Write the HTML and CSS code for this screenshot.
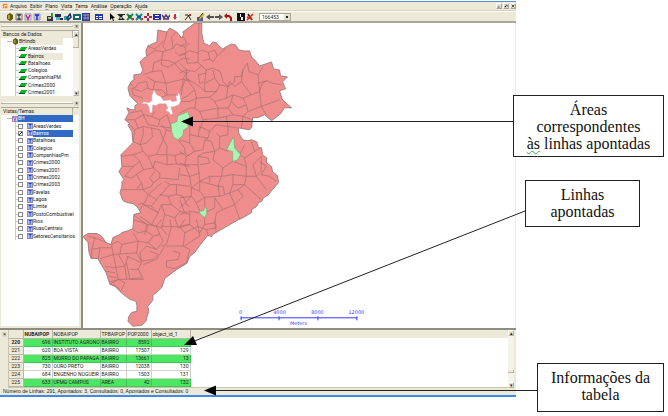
FILE: index.html
```html
<!DOCTYPE html>
<html lang="pt-BR">
<head>
<meta charset="utf-8">
<title>TerraView</title>
<link rel="stylesheet" href="styles.css">
</head>
<body>
<main class="page">
<div class="app">
  <header class="menubar">
    <svg class="logo" viewBox="0 0 8 8"><path fill="#f58a2a" d="M1 1h6v6H1z"/><path fill="#fff" d="M3 3h3v1H4v2H3z"/></svg>
    <nav class="menus">
      <a href="#"><u>A</u>rquivo</a><a href="#"><u>E</u>xibir</a><a href="#"><u>P</u>lano</a><a href="#"><u>V</u>ista</a><a href="#"><u>T</u>ema</a><a href="#">A<u>n</u>álise</a><a href="#"><u>O</u>peração</a><a href="#">Aj<u>u</u>da</a>
    </nav>
    <div class="winbtns">
      <button aria-label="Minimizar"><svg viewBox="0 0 6 6"><path d="M1 4h3v1H1z"/></svg></button>
      <button aria-label="Restaurar"><svg viewBox="0 0 6 6"><path d="M2 1h3v3H4V2H2zM1 3h2v2H1z"/></svg></button>
      <button aria-label="Fechar"><svg viewBox="0 0 6 6"><path d="M1 1l4 4M5 1L1 5" stroke="#111"/></svg></button>
    </div>
  </header>

  <div class="toolbar">
    <div class="tools">
      <button aria-label="Banco"><svg viewBox="0 0 8 8"><path fill="#5d5a08" d="M1 2l3-2 3 2v4L4 8 1 6z"/><path fill="#a8a020" d="M2 2h2v4H2z"/></svg></button>
      <button aria-label="Importar"><svg viewBox="0 0 8 8"><path fill="#ddd" stroke="#777" d="M1 1h6v6H1z"/><path stroke="#222" d="M4 1v6M2 2h4M2 6h4"/></svg></button>
      <button aria-label="Vista"><svg viewBox="0 0 8 8"><path fill="#f3e4f5" stroke="#999" d="M1 1h6v6H1z"/><path fill="none" stroke="#b01fa8" stroke-width="1.5" d="M2 2l2 4 2-4"/></svg></button>
      <button aria-label="Tema"><svg viewBox="0 0 8 8"><path fill="#c7c8f5" stroke="#999" d="M1 1h6v6H1z"/><path stroke="#2222e0" stroke-width="1.5" d="M2 2h4M4 2v5"/></svg></button>
    </div>
    <div class="tools">
      <button aria-label="Camada"><svg viewBox="0 0 8 8"><path fill="#23337a" d="M1 3h6v5H1z"/><path fill="#d9bf2e" d="M2 4h3v2H2z"/><path fill="#2a9a4a" d="M5 0h2v4H5z"/></svg></button>
      <button aria-label="Editar"><svg viewBox="0 0 8 8"><path fill="#252a55" d="M0 1h6v3H0zM3 5h5v2H3z"/><path fill="#4bb8c5" d="M1 4h4v3H1z"/></svg></button>
      <button aria-label="Buscar"><svg viewBox="0 0 8 8"><path fill="#3aa19c" d="M0 3h5v4H0z"/><path fill="none" stroke="#172e78" stroke-width="1.5" d="M3 5l3-4 1 3-3 3z"/></svg></button>
      <button aria-label="Quadro"><svg viewBox="0 0 8 8"><path fill="#15656a" d="M0 1h8v6H0z"/><path fill="#fff" d="M2 3h4v2H2z"/></svg></button>
      <button aria-label="Grade"><svg viewBox="0 0 8 8"><path fill="#343796" d="M0 0h8v8H0z"/><path stroke="#bbb" d="M1 2h6M1 5h6M3 1v6M6 1v6" stroke-width=".7"/></svg></button>
    </div>
    <div class="tools">
      <button aria-label="Tabela"><svg viewBox="0 0 8 8"><path fill="#24379c" d="M0 1h8v6H0z"/><path fill="#fff" d="M1 3h2v1H1zM4 3h3v1H4zM1 5h2v1H1zM4 5h3v1H4z"/></svg></button>
    </div>
    <div class="tools">
      <button aria-label="Apontar"><svg viewBox="0 0 8 8"><path d="M2 0l5 5H5l1 3-1 0-1-3-2 2z"/></svg></button>
      <button aria-label="Desenhar"><svg viewBox="0 0 8 8"><path fill="#222" d="M0 1h8v1H6L5 4l3 3H1l2-3z"/><path stroke="#fff" d="M3 5h2"/></svg></button>
      <button aria-label="Aproximar"><svg viewBox="0 0 8 8"><path stroke="#16877a" stroke-width="2" d="M1 1l6 6M7 1L1 7"/><path fill="#172" d="M2 2h3v3H2z"/><path fill="#c33" d="M6 5h2v2H6z"/></svg></button>
      <button aria-label="Afastar"><svg viewBox="0 0 8 8"><path stroke="#16878a" stroke-width="2" d="M1 1l6 6M7 1L1 7"/><path fill="#15c" d="M2 3h4v2H2z"/><path fill="#c33" d="M6 5h2v2H6z"/></svg></button>
      <button aria-label="Mover"><svg viewBox="0 0 8 8"><path fill="#b22446" d="M3 0h2v3h3v2H5v3H3V5H0V3h3z"/><path fill="#fff" d="M3 3h2v2H3z"/></svg></button>
      <button aria-label="Tudo"><svg viewBox="0 0 8 8"><path fill="#2b2e9c" d="M0 1h8v6H0z"/><path fill="#fff" d="M2 2h4v1H2zM2 5h4v1H2z"/></svg></button>
      <button aria-label="Medir"><svg viewBox="0 0 8 8"><path fill="none" stroke="#523a78" stroke-width="1.5" d="M0 2l2 3 2-3 2 3 2-3M1 6h6"/></svg></button>
      <button aria-label="Informar"><svg viewBox="0 0 8 8"><path fill="#fff" d="M0 0h8v8H0z"/><path fill="#e22" d="M3 1h2v3h1L4 7 2 4h1z"/></svg></button>
    </div>
    <div class="tools">
      <button aria-label="Cortar"><svg viewBox="0 0 8 8"><path fill="none" stroke="#222" d="M1 7l5-6M1 2h3l3 5"/><path fill="#c22" d="M5 1h2v2H5z"/></svg></button>
    </div>
    <div class="tools">
      <button aria-label="Pintar"><svg viewBox="0 0 8 8"><path fill="#555aa0" d="M0 4h6v4H0z"/><path stroke="#d8b11c" stroke-width="2" d="M2 6l5-5"/><path stroke="#333" d="M1 6l5-6"/></svg></button>
      <button aria-label="Anterior"><svg viewBox="0 0 8 8"><path fill="#555" d="M0 4l4-3v2h4v2H4v2z"/></svg></button>
      <button aria-label="Próximo"><svg viewBox="0 0 8 8"><path fill="#555" d="M8 4L4 1v2H0v2h4v2z"/></svg></button>
      <button aria-label="Desfazer"><svg viewBox="0 0 8 8"><path fill="none" stroke="#a61515" stroke-width="2" d="M2 3h3l2 2v3"/><path fill="#a61515" d="M0 3l3-3v6z"/></svg></button>
    </div>
    <div class="tools">
      <button aria-label="Parar"><svg viewBox="0 0 8 8"><path fill="#111" d="M0 0h8v8H0z"/><path fill="#fff" d="M3 1h1v3H3zM4 4h2v3H4z"/></svg></button>
      <button aria-label="Cancelar"><svg viewBox="0 0 8 8"><path stroke="#222" stroke-width="1.5" d="M2 1l4 6"/><path stroke="#e02020" stroke-width="1.5" d="M1 7l6-6M1 4l5 2"/></svg></button>
    </div>
    <select class="scale" aria-label="Escala"><option>166453</option></select>
  </div>

  <div class="work">
    <aside class="side">
      <div class="grip"><i></i><button aria-label="Fechar bancos">×</button></div>
      <section class="dock">
        <div class="col">
          <h2>Bancos de Dados</h2>
          <ul class="tree bases">
            <li class="root lit"><svg viewBox="0 0 8 8"><path fill="#5d5a08" d="M1 2l3-2 3 2v4L4 8 1 6z"/><path fill="#a8a020" d="M2 2h2v4H2z"/></svg><span>BHindb</span></li>
            <li><b class="layer"></b><span>AreasVerdes</span></li>
            <li class="lit"><b class="layer"></b><span>Bairros</span></li>
            <li><b class="layer"></b><span>Batalhoes</span></li>
            <li><b class="layer"></b><span>Colegios</span></li>
            <li><b class="layer"></b><span>CompanhiaPM</span></li>
            <li><b class="layer"></b><span>Crimes2000</span></li>
            <li><b class="layer"></b><span>Crimes2001</span></li>
          </ul>
        </div>
        <div class="vscroll tall"><button aria-label="Subir">▴</button><i></i><button aria-label="Descer">▾</button></div>
      </section>
      <div class="grip"><i></i><button aria-label="Fechar vistas">×</button></div>
      <section class="dock views">
        <div class="col">
          <h2>Vistas/Temas</h2>
          <ul class="tree themes">
            <li class="root sel"><b class="v">V</b><span>BH</span></li>
            <li><input type="checkbox" id="t1"><b class="t">T</b><label for="t1">AreasVerdes</label></li>
            <li class="sel"><input type="checkbox" id="t2" checked><b class="t">T</b><label for="t2">Bairros</label></li>
            <li><input type="checkbox" id="t3"><b class="t">T</b><label for="t3">Batalhoes</label></li>
            <li><input type="checkbox" id="t4"><b class="t">T</b><label for="t4">Colegios</label></li>
            <li><input type="checkbox" id="t5"><b class="t">T</b><label for="t5">CompanhiasPm</label></li>
            <li><input type="checkbox" id="t6"><b class="t">T</b><label for="t6">Crimes2000</label></li>
            <li><input type="checkbox" id="t7"><b class="t">T</b><label for="t7">Crimes2001</label></li>
            <li><input type="checkbox" id="t8"><b class="t">T</b><label for="t8">Crimes2002</label></li>
            <li><input type="checkbox" id="t9"><b class="t">T</b><label for="t9">Crimes2003</label></li>
            <li><input type="checkbox" id="t10"><b class="t">T</b><label for="t10">Favelas</label></li>
            <li><input type="checkbox" id="t11"><b class="t">T</b><label for="t11">Lagoa</label></li>
            <li><input type="checkbox" id="t12"><b class="t">T</b><label for="t12">Limite</label></li>
            <li><input type="checkbox" id="t13"><b class="t">T</b><label for="t13">PostoCombustivel</label></li>
            <li><input type="checkbox" id="t14"><b class="t">T</b><label for="t14">Rios</label></li>
            <li><input type="checkbox" id="t15"><b class="t">T</b><label for="t15">RuasCentrais</label></li>
            <li><input type="checkbox" id="t16"><b class="t">T</b><label for="t16">SetoresCensitarios</label></li>
          </ul>
        </div>
        <div class="stub"></div>
      </section>
    </aside>

    <section class="map">
      <svg viewBox="83 23 433 306" role="img" aria-label="Mapa dos bairros">
        <defs><clipPath id="city"><use href="#outline"/></clipPath></defs>
        <path id="outline" fill="#ef8c8c" stroke="#8d7474" stroke-width=".8" d="M128 88L131 82 134 80 134 75 141 74 143 70 140 62 144 58 147 57 146 51 148 46 157 42 158 30 167 32 170 28 177 32 182 38 184 34 183 32 190 27 195 23 202 23 202 33 204 43 210 46 213 42 217 43 219 46 223 49 228 46 232 44 236 45 239 50 245 51 250 51 252 57 256 61 260 66 266 64 272 62 274 69 280 70 281 76 288 77 283 82 286 89 280 91 283 100 292 108 285 108 281 114 272 121 265 115 258 118 253 118 252 128 250 130 243 129 239 128 239 133 243 140 248 141 252 140 257 142 259 148 262 148 263 155 267 158 267 163 272 167 273 172 278 176 279 183 273 190 268 196 264 198 262 202 259 203 257 207 252 210 252 213 242 219 239 220 213 235 212 237 208 236 200 246 195 253 190 257 187 264 177 270 165 279 162 288 158 292 153 296 153 301 148 307 149 312 147 318 146 322 142 326 133 327 128 322 129 317 132 313 137 312 137 306 136 302 130 300 122 294 115 287 110 285 109 282 106 273 100 263 98 259 91 259 89 253 88 243 83 237 88 234 97 234 102 237 106 243 111 245 113 238 120 235 122 233 129 231 133 229 134 215 141 213 137 207 133 204 127 203 123 201 120 193 122 187 122 182 124 180 119 172 122 167 121 155 128 148 133 143 132 132 128 125 130 124 125 120 129 113 127 108 131 110 135 110 135 106 138 104 130 96Z"/>
        <g clip-path="url(#city)" fill="none" stroke="#a66e6e" stroke-width="2">
          <g transform="translate(180 20) scale(.3333)">
            <path d="M58 8L56 68 55 128 80 150 100 145 122 155 130 185 145 200 165 185 165 170 185 170 190 150 203 130 208 155 235 165 250 140M0 50L15 55 20 70 0 80M0 105L15 100 30 92 55 100M15 100L22 130 55 128M55 98L65 90 86 98 90 118 70 122M86 98L105 90 112 108 100 125 90 118M112 108L140 85M0 130L20 150 20 175 0 215M0 160L20 150 45 155 65 138M20 175L45 210 20 230 0 240M20 175L60 200 75 215M80 150L75 185 60 190 56 165 78 160M75 215L75 190 105 175 100 150M105 175L120 195 110 215 75 215M120 195L145 200 150 185 165 200 185 185 190 150M185 185L215 225 240 215 235 165M235 190L262 183 280 190 305 195M240 215L248 190 262 183M240 215L245 260 300 240M45 210L50 235 90 232 110 215M50 235L30 245 0 245M90 232L105 245 140 235 145 200M140 235L160 225 190 235 215 225M160 225L155 245 175 265 200 255 190 235M105 245L115 265 145 265 155 245M50 235L45 265 60 275 115 265M0 280L30 265 45 265M200 255L205 275 245 260M205 275L190 290 160 285 145 265M60 275L70 300 115 295 115 265M115 295L140 290 160 285M190 290L218 300M245 260L260 285M70 300L60 330M140 290L145 320M190 290L185 325"/>
          </g>
          <g transform="translate(80 20) scale(.3333)">
            <path d="M262 35L250 80 260 92 280 85 275 50 290 35M203 78L225 88 250 65M195 112L225 92 250 95 260 92M250 95L245 120 222 128 218 155 190 165M245 120L265 122 285 130 265 142 245 135 245 120M280 85L290 72 315 80 330 70M315 80L320 100 300 108 285 95M285 130L310 115 330 118M218 155L245 152 258 190 225 185 200 170M258 190L310 178 320 160 330 155M310 178L330 185M285 130L300 150 320 160M225 185L220 210 200 205 185 215 155 205M150 190L165 205 175 190 200 185 205 205M155 205L160 225 190 235M258 190L262 225 240 235M310 178L305 225M262 225L290 225M262 225L245 210 222 210M150 280L185 272 190 285 215 290 225 275M140 300L165 300 190 285M165 300L175 325M190 285L205 315 235 320 240 300 215 290M240 300L262 285M240 320L275 325 262 285"/>
          </g>
          <g transform="translate(80 125) scale(.3333)">
            <path d="M150 0L165 15 160 50 180 60 190 80 160 90 125 95M165 15L190 5 215 10 218 35 200 55 180 60M190 5L190 30 180 60M215 10L240 15 250 45 230 90 205 95 190 80M250 45L260 15 245 0M260 15L275 20M250 45L262 65 260 90 230 90M262 90L285 92 290 118 262 120 262 90M285 92L315 85 330 95M295 45L315 70 315 85M290 118L330 125M160 90L180 110 160 125 125 125M160 125L135 155M180 110L190 135 220 130 205 95M220 130L225 110 262 120M190 135L170 150 185 175 170 195 125 195M135 155L155 160 170 150M220 130L240 145 240 160 220 175 210 160 225 140M240 160L295 165 300 130M185 175L190 195 170 195M190 195L205 210 245 175M205 210L195 235 175 240M190 195L215 185 220 175M205 210L230 225 270 180 255 170M230 225L215 245 190 240 178 260M215 245L235 265 245 240 275 240 265 215 240 210M190 240L235 265 215 300 180 275M270 180L290 180 290 210 265 215M290 180L330 185M290 210L310 215 320 240 330 245M275 240L300 260 285 280 255 270 245 240M285 280L295 310 330 300M255 270L245 310 215 300M300 260L330 270M300 225L315 265M160 270L200 300 195 330M245 310L260 330"/>
          </g>
          <g transform="translate(180 125) scale(.3333)">
            <path d="M30 0L30 30 55 35 60 5M60 5L90 20 85 40 55 35M90 20L110 0 145 5 145 30 120 35 110 25M145 5L175 10M0 45L30 55 30 30M30 55L45 80 70 75 75 45 85 40M75 45L95 50 105 80 70 85M105 80L120 70 120 35M120 70L145 80M0 80L20 95 45 80M20 95L15 120 55 120 55 95 70 85M55 95L85 100 90 115 60 120M105 80L100 105 130 130 125 155 90 155 60 170 55 120M130 130L160 110M0 115L15 120 30 155 0 150M30 155L60 145M30 155L35 190 60 170M60 170L115 185 125 155 160 150 200 155M90 155L90 175M160 110L200 125 195 100 180 90M200 125L200 155 230 155 220 120 245 95M195 100L225 80 215 50M180 90L195 60M225 80L240 70M245 95L245 140 230 155M240 110L260 125 245 150 270 155M200 155L195 180 160 180 160 150M195 180L245 225M270 155L290 170M230 155L260 195M160 180L150 205 175 195 195 180M115 185L120 215 75 218 60 200 60 170M35 190L35 215 0 220M35 190L60 200M120 215L135 210 130 185 115 185M135 210L150 205 165 240 130 255 105 220M165 240L190 215 175 195M165 240L180 285M130 255L110 265 105 295 110 325M75 218L75 248M0 250L35 215 50 235 75 218M50 235L60 260M82 262L105 250 105 220M0 270L30 260 58 265M30 260L30 300 0 305M30 300L60 325 75 300 75 278M75 300L105 295"/>
          </g>
          <g transform="translate(70 220) scale(.3333)">
            <path d="M190 0L235 15 230 35 205 40 190 30M235 15L260 20 275 0M230 35L250 50 270 45 260 20M250 50L235 70 205 65 190 40M270 45L280 65 260 90 235 70M275 20L330 22 345 0M300 0L305 22 290 75 275 80M330 22L345 40 340 80 290 80M345 40L385 20 380 0M385 20L390 50 365 65 345 80M385 20L410 30 415 48M410 30L440 25 435 0M340 80L360 90 350 130 315 148 290 142 290 125 325 120 330 100 310 95M260 90L230 80 210 100 215 125 250 120 265 105 240 95M285 80L260 120 220 135M205 65L200 100 215 125M205 65L155 75 145 65 125 75 130 105 200 100M155 75L150 105M130 105L90 118M125 75L75 55 55 50M75 55L65 90 65 115M65 90L90 85 125 85M90 85L85 118M130 105L145 180 115 190M145 105L165 140 175 110M130 145L165 140 170 180 145 180M105 140L130 145M105 155L135 160M115 170L140 175M170 130L180 180 220 180 205 150 215 130 170 110M180 150L205 150M120 195L145 180 165 190 150 220M130 195L150 210M170 180L215 175"/>
          </g>
        </g>
        <path fill="#fff" stroke="#c9a5a5" stroke-width=".4" d="M142 104L144 102 149 103 152 101 152 96 154 90 157 95 161 97 164 101 170 100 173 102 177 101 176 96 178 96 178 93 180 95 181 101 179 105 174 107 171 107 173 114 171 115 169 112 166 111 168 108 166 104 159 104 156 106 153 105 152 113 150 113 149 107 147 104Z"/>
        <g fill="#a9f5b3" stroke="#7b9a78" stroke-width=".6">
          <path d="M171 124L177 122 178 116 188 112 190 117 189 122 188 128 184 130 183 136 178 140 174 138 172 132Z"/>
          <path d="M234 137L235 148 241 155 238 160 233 162 233 152 227 150 231 142Z"/>
          <path d="M199 212L204 211 205 208 207 209 207 214 205 218 202 216Z"/>
        </g>
        <g class="ruler"><path d="M241 318.500H358M241.500 317v4M279.500 317v4M318.500 317v4M357.500 317v4" stroke="#3838ff"/><text x="241" y="315">0</text><text x="280" y="315">4000</text><text x="318" y="315">8000</text><text x="357" y="315">12000</text><text x="299" y="326">Meters</text></g>
      </svg>
    </section>
  </div>

  <section class="grid-dock">
    <div class="gutter"><button aria-label="Fechar tabela">×</button></div>
    <div class="grid-area">
      <table>
        <colgroup><col class="c0"><col class="c1"><col class="c2"><col class="c3"><col class="c4"><col class="c5"><col></colgroup>
        <thead><tr><th></th><th><strong>NUBAIPOP</strong></th><th>NOBAIPOP</th><th>TPBAIPOP</th><th>POP2000</th><th>object_id_1</th><th></th></tr></thead>
        <tbody>
          <tr class="hit"><th><strong>220</strong></th><td class="n">696</td><td>INSTITUTO AGRONO</td><td>BAIRRO</td><td class="n">8592</td><td class="n"></td><td></td></tr>
          <tr><th>221</th><td class="n">620</td><td>BOA VISTA</td><td>BAIRRO</td><td class="n">17507</td><td class="n">129</td><td></td></tr>
          <tr class="hit"><th>222</th><td class="n">825</td><td>MORRO DO PAPAGA</td><td>BAIRRO</td><td class="n">13661</td><td class="n">13</td><td></td></tr>
          <tr><th>223</th><td class="n">730</td><td>OURO PRETO</td><td>BAIRRO</td><td class="n">12038</td><td class="n">130</td><td></td></tr>
          <tr><th>224</th><td class="n">684</td><td>ENGENHO NOGUEIR</td><td>BAIRRO</td><td class="n">1503</td><td class="n">131</td><td></td></tr>
          <tr class="hit"><th>225</th><td class="n">633</td><td>UFMG CAMPUS</td><td>AREA</td><td class="n">42</td><td class="n">132</td><td></td></tr>
        </tbody>
      </table>
    </div>
    <div class="vscroll low"><button aria-label="Subir tabela">▴</button><i></i><button aria-label="Descer tabela">▾</button></div>
  </section>
  <footer class="status">Número de Linhas: 291, Apontados: 3, Consultados: 0, Apontados e Consultados: 0</footer>
</div>

<svg class="leaders" viewBox="0 0 668 416" aria-hidden="true">
  <g stroke="#222" stroke-width="1"><path d="M513 121.500H190M525 211L192 342M537 390.500H214"/></g>
  <path d="M181 121.500l12-5v10zM184 345l9-9 4 9zM204 390.500l12-5v10z"/>
</svg>
<p class="note areas">Áreas<br>correspondentes<br><span class="wavy">às</span> linhas apontadas</p>
<p class="note rows">Linhas<br>apontadas</p>
<p class="note info">Informações da<br>tabela</p>
</main>
</body>
</html>
```
FILE: styles.css
```css
* { box-sizing: border-box; }
body { margin: 0; background: #fff; color: #222; font-family: Roboto, "Liberation Sans", sans-serif; font-size: 5px; line-height: 7px; }
button { padding: 0; margin: 0; border: 0; background: none; font: inherit; color: inherit; display: block; }
svg { display: block; }
.page { position: relative; display: grid; grid-template-columns: 1fr 152px; min-height: 416px; align-items: start; padding-top: 1px; }
.app { border-top: 1px solid #5f8fd8; border-bottom: 2px solid #3f8ae6; background: #ece9d8; min-width: 0; }

.menubar { display: flex; align-items: center; height: 9px; padding-left: 2px; border-bottom: 1px solid #d5d1bf; }
.logo { width: 6px; height: 6px; margin-right: 2px; }
.menus { display: flex; flex: 1; gap: 3px; }
.menus a { color: #222; text-decoration: none; }
.menus u { text-decoration-color: #999; }
.winbtns { display: flex; gap: 1px; }
.winbtns button { width: 6px; height: 6px; background: #e4e0d0; border: 1px solid #aaa799; border-top-color: #fff; border-left-color: #fff; }

.toolbar { display: flex; align-items: center; height: 12px; padding-left: 6px; gap: 5px; border-top: 1px solid #fff; border-bottom: 2px solid #aca899; }
.tools { display: flex; gap: 1px; }
.tools button, .tools svg { width: 8px; height: 8px; }
.scale { appearance: none; width: 32px; height: 8px; margin: 0; padding: 0 2px; border: 1px solid #aaa799; border-radius: 0; color: #222; font: inherit; line-height: 6px; background: linear-gradient(#222, #222) right 2px center / 2px 2px no-repeat, linear-gradient(#e4e0d0, #e4e0d0) right / 6px 100% no-repeat, #fff; }

.work { display: grid; grid-template-columns: 83px 1fr; }
.side { display: flex; flex-direction: column; border-right: 2px solid #8f8c80; padding: 0 2px 2px 1px; min-width: 0; }
.grip { display: flex; align-items: center; gap: 1px; height: 8px; margin-top: -1px; }
.grip i { flex: 1; height: 2px; border: 1px solid #b9b5a4; border-top-color: #fff; }
.grip button, .gutter button { width: 5px; height: 5px; line-height: 5px; text-align: center; background: #dedac9; }
.dock { display: flex; background: #fff; height: 66px; border-top: 1px solid #aca899; margin-bottom: 4px; }
.dock .col { flex: 1; min-width: 0; }
.views { flex: 1; margin-bottom: 0; }
h2 { margin: 0; height: 7px; padding-left: 2px; font: inherit; line-height: 7px; background: #ece9d8; border-right: 1px solid #b9b5a4; }
.tree { margin: 0; padding: 0 0 0 6px; list-style: none; display: grid; grid-template-columns: minmax(0, 1fr); grid-auto-rows: 1fr; }
.bases { height: 58px; margin-right: 10px; }
.themes { height: 125px; }
.tree li { display: flex; align-items: center; padding-left: 12px; min-height: 0; white-space: nowrap; background: linear-gradient(#ccc, #ccc) 8px 0 / 1px 100% no-repeat, linear-gradient(#ccc, #ccc) 8px 50% / 4px 1px no-repeat; }
.tree .root { padding-left: 5px; background: linear-gradient(#bbb, #bbb) 0 50% / 5px 1px no-repeat; }
.tree svg { width: 7px; height: 7px; }
.tree .lit span { flex: 1; background: #ece9d8; }
.tree .sel span, .tree .sel label { flex: 1; background: #316ac5; color: #fff; }
.tree .layer { width: 6px; height: 4px; margin: 0 2px 0 1px; background: #08b326; border-bottom: 1px solid #124a1b; transform: skewX(-35deg); }
.themes .t, .themes .v { flex: none; width: 6px; height: 6px; background: #b9baf2; color: #1818d8; border: 1px solid #8d8daf; line-height: 4px; text-align: center; }
.themes .v { background: #f3dcf2; color: #a81ba0; }
.themes input { appearance: none; width: 5px; height: 5px; margin: 0 4px 0 0; border: 1px solid #888; background: #fff; flex: none; }
.themes input:checked { background: linear-gradient(135deg, #fff 35%, #111 36%, #111 65%, #fff 66%); }
.themes li:not(.root) { padding-left: 11px; }
.stub { width: 6px; height: 7px; background: #ece9d8; }
.vscroll { display: flex; flex-direction: column; width: 6px; background: #f5f3ea; }
.vscroll button { width: 6px; height: 6px; line-height: 5px; text-align: center; background: #e4e0d0; border: 1px solid #b9b5a4; border-top-color: #fff; border-left-color: #fff; }
.vscroll i { background: #ece9d8; border-right: 1px solid #b9b5a4; border-bottom: 1px solid #b9b5a4; }
.tall i { height: 11px; margin-bottom: auto; }
.low i { height: 3px; margin-top: auto; margin-bottom: 9px; }

.map { background: #fff; min-width: 0; border-right: 1px solid #e4eff2; }
.map svg { width: 100%; }
.ruler text { fill: #3838ff; font-family: "DejaVu Sans", sans-serif; font-size: 5px; text-anchor: middle; }

.grid-dock { display: flex; border-top: 2px solid #8f8c80; padding-right: 2px; }
.gutter { width: 9px; padding: 2px; border-right: 1px solid #c9c5b4; }
.grid-area { flex: 1; min-width: 0; background: #fff; border-bottom: 1px solid #c9c5b4; }
table { width: 100%; table-layout: fixed; border-collapse: collapse; line-height: 7px; }
.c0 { width: 14px; } .c1 { width: 29px; } .c2 { width: 48px; } .c3 { width: 26px; } .c4 { width: 25px; } .c5 { width: 39px; }
th, td { height: 8px; padding: 0 1px; white-space: nowrap; font-weight: 400; text-align: left; border-right: 1px solid #d2d0c8; border-bottom: 1px solid #d2d0c8; }
th { background: #ece9d8; border-color: #b9b5a4; }
td:last-child, th:last-child { border: 0; }
tbody th { text-align: center; }
.hit td:not(:last-child) { background: #4ae860; border-color: #43c257; }
td.n { text-align: right; }
.status { height: 7px; padding-left: 3px; font-family: "Liberation Sans", sans-serif; line-height: 7px; white-space: nowrap; }

.leaders { position: absolute; left: 0; top: 0; width: 668px; height: 416px; pointer-events: none; }
.note { position: absolute; margin: 0; display: block; background: #fff; border: 1px solid #222; color: #111; font-family: "Liberation Serif", serif; font-size: 16px; line-height: 17px; text-align: center; padding: 5px 4px; }
.areas { left: 513px; top: 95px; width: 151px; height: 62px; }
.rows { left: 525px; top: 180px; width: 115px; height: 47px; }
.info { left: 537px; top: 363px; width: 127px; height: 49px; }
.wavy { text-decoration: underline wavy #3aa84a 1px; }
```
